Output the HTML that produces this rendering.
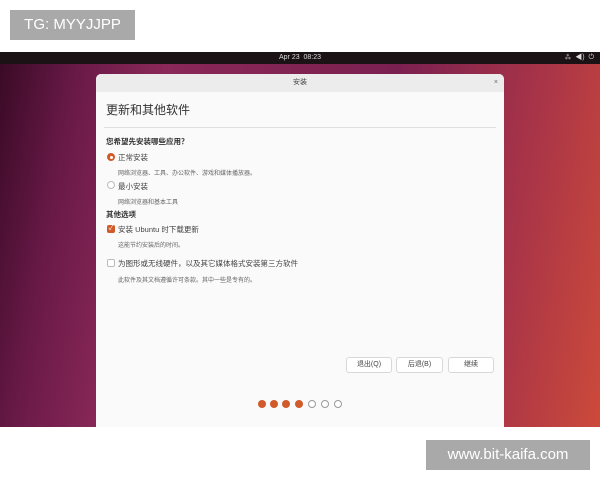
<!DOCTYPE html><html><head><meta charset="utf-8"><style>
*{margin:0;padding:0;box-sizing:border-box}
body{width:600px;height:480px;background:#fff;position:relative;overflow:hidden;font-family:"Liberation Sans","Noto Sans CJK SC",sans-serif;color:#333}
.abs{position:absolute}
#bar{left:0;top:52px;width:600px;height:12px;background:#1a1214;color:#ddd;font-size:7px;text-align:center;line-height:12px}
#desk{left:0;top:64px;width:600px;height:363px;background:linear-gradient(100deg,#3a0a26 0%,#6a1a48 12%,#8a2858 25%,#7a2050 60%,#a83448 82%,#cc4a3a 100%)}
#dlg{left:96px;top:74px;width:408px;height:353px;background:#fafafa;border-radius:5px 5px 0 0;overflow:hidden}
#tb{height:18px;background:#ececec;font-size:7px;text-align:center;line-height:18px;color:#444}
.t{position:absolute;white-space:nowrap}
.s{font-size:6px;color:#666}
.m{font-size:7.5px;color:#444}
.b{font-size:7.5px;font-weight:bold;color:#333}
.btn{position:absolute;top:283px;height:16px;border:1px solid #d8d8d8;border-radius:3px;background:#fff;font-size:7px;text-align:center;line-height:14px;color:#444}
.dot{position:absolute;top:326px;width:8px;height:8px;border-radius:50%;background:#d05a2a}
.o{background:#fff;border:1px solid #999}
.lab{background:#a9a9a9;color:#fff;font-size:15px;line-height:30px;text-align:center}
</style></head><body>
<div class="abs lab" style="left:10px;top:10px;width:125px;height:30px">TG: MYYJJPP</div>
<div class="abs" id="bar">Apr 23&nbsp; 08:23<span style="position:absolute;right:6px;top:0">⁂ &nbsp;◀) &nbsp;⏻</span></div>
<div class="abs" id="desk"></div>
<div class="abs" id="dlg">
<div id="tb">安装<span style="position:absolute;right:6px;color:#666">×</span></div>
<div class="t" style="left:10px;top:27px;font-size:12px;color:#333">更新和其他软件</div>
<div class="abs" style="left:8px;top:53px;width:392px;height:1px;background:#e0e0e0"></div>
<div class="t b" style="left:10px;top:62px">您希望先安装哪些应用？</div>
<div class="abs" style="left:11px;top:79px;width:8px;height:8px;border-radius:50%;background:#d05a2a;border:2px solid #d05a2a"><div style="margin:0.5px;width:3px;height:3px;border-radius:50%;background:#fff"></div></div>
<div class="t m" style="left:22px;top:78px">正常安装</div>
<div class="t s" style="left:22px;top:94px">网络浏览器、工具、办公软件、游戏和媒体播放器。</div>
<div class="abs" style="left:11px;top:107px;width:8px;height:8px;border-radius:50%;border:1px solid #bbb;background:#fff"></div>
<div class="t m" style="left:22px;top:107px">最小安装</div>
<div class="t s" style="left:22px;top:123px">网络浏览器和基本工具</div>
<div class="t b" style="left:10px;top:135px">其他选项</div>
<div class="abs" style="left:11px;top:151px;width:8px;height:8px;border-radius:2px;background:#d05a2a;color:#fff;font-size:7px;line-height:8px;text-align:center">✓</div>
<div class="t m" style="left:22px;top:150px">安装 Ubuntu 时下载更新</div>
<div class="t s" style="left:22px;top:166px">这能节约安装后的时间。</div>
<div class="abs" style="left:11px;top:185px;width:8px;height:8px;border-radius:2px;border:1px solid #bbb;background:#fff"></div>
<div class="t m" style="left:22px;top:184px">为图形或无线硬件，以及其它媒体格式安装第三方软件</div>
<div class="t s" style="left:22px;top:201px">此软件及其文档遵循许可条款。其中一些是专有的。</div>
<div class="btn" style="left:250px;width:46px">退出(Q)</div>
<div class="btn" style="left:300px;width:47px">后退(B)</div>
<div class="btn" style="left:352px;width:46px">继续</div>
<div class="dot" style="left:162px"></div><div class="dot" style="left:174px"></div><div class="dot" style="left:186px"></div><div class="dot" style="left:199px"></div>
<div class="dot o" style="left:212px"></div><div class="dot o" style="left:225px"></div><div class="dot o" style="left:238px"></div>
</div>
<div class="abs lab" style="left:426px;top:440px;width:164px;height:30px">www.bit-kaifa.com</div>
</body></html>
